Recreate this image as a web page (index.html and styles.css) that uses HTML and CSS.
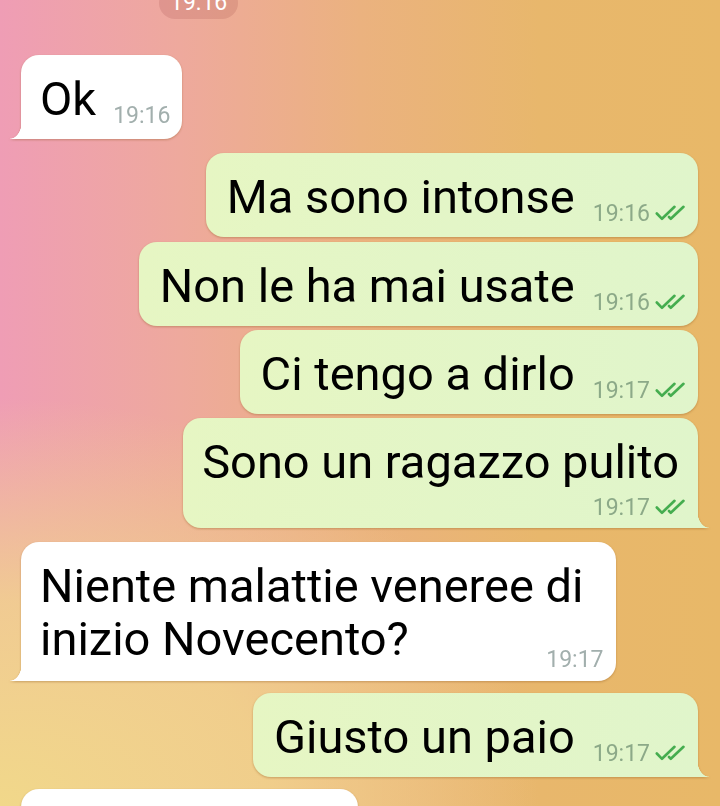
FILE: index.html
```html
<!DOCTYPE html>
<html lang="it">
<head>
<meta charset="utf-8">
<title>Chat</title>
<link rel="stylesheet" href="styles.css">
</head>
<body>
<div class="chat">
  <div class="date-row"><span class="date-pill">19:16</span></div>

  <div class="bubble in tail-in first">
    <div class="text">Ok</div>
    <div class="meta"><span>19:16</span></div>
  </div>

  <div class="bubble out group-start">
    <div class="text">Ma sono intonse</div>
    <div class="meta"><span>19:16</span><svg class="checks" width="33" height="16" viewBox="0 0 33 16"><path d="M1.8 8.5 L7 13.8 L19.5 1.8 M14 12 L15.8 13.8 L28.5 1.8" fill="none" stroke="#45ad4f" stroke-width="2.6" stroke-linecap="round" stroke-linejoin="round"/></svg></div>
  </div>

  <div class="bubble out grouped">
    <div class="text">Non le ha mai usate</div>
    <div class="meta"><span>19:16</span><svg class="checks" width="33" height="16" viewBox="0 0 33 16"><path d="M1.8 8.5 L7 13.8 L19.5 1.8 M14 12 L15.8 13.8 L28.5 1.8" fill="none" stroke="#45ad4f" stroke-width="2.6" stroke-linecap="round" stroke-linejoin="round"/></svg></div>
  </div>

  <div class="bubble out grouped">
    <div class="text">Ci tengo a dirlo</div>
    <div class="meta"><span>19:17</span><svg class="checks" width="33" height="16" viewBox="0 0 33 16"><path d="M1.8 8.5 L7 13.8 L19.5 1.8 M14 12 L15.8 13.8 L28.5 1.8" fill="none" stroke="#45ad4f" stroke-width="2.6" stroke-linecap="round" stroke-linejoin="round"/></svg></div>
  </div>

  <div class="bubble out grouped stack tail-out">
    <div class="text">Sono un ragazzo pulito</div>
    <div class="meta"><span>19:17</span><svg class="checks" width="33" height="16" viewBox="0 0 33 16"><path d="M1.8 8.5 L7 13.8 L19.5 1.8 M14 12 L15.8 13.8 L28.5 1.8" fill="none" stroke="#45ad4f" stroke-width="2.6" stroke-linecap="round" stroke-linejoin="round"/></svg></div>
  </div>

  <div class="bubble in multi tail-in group-start">
    <div class="text">Niente malattie veneree di<br>inizio Novecento?</div>
    <div class="meta"><span>19:17</span></div>
  </div>

  <div class="bubble out tail-out group-next">
    <div class="text">Giusto un paio</div>
    <div class="meta"><span>19:17</span><svg class="checks" width="33" height="16" viewBox="0 0 33 16"><path d="M1.8 8.5 L7 13.8 L19.5 1.8 M14 12 L15.8 13.8 L28.5 1.8" fill="none" stroke="#45ad4f" stroke-width="2.6" stroke-linecap="round" stroke-linejoin="round"/></svg></div>
  </div>

  <div class="bubble in partial group-next"></div>
</div>
</body>
</html>
```

FILE: styles.css
```css
html, body {
  margin: 0;
  padding: 0;
}

.chat {
  width: 720px;
  height: 806px;
  overflow: hidden;
  display: flex;
  flex-direction: column;
  font-family: Roboto, "Noto Sans", sans-serif;
  background:
    radial-gradient(ellipse 900px 680px at 0% 100%, rgba(241, 216, 138, 1) 0%, rgba(241, 214, 138, 0.8) 30%, rgba(241, 214, 138, 0) 60%),
    linear-gradient(90deg, #ef9db5 0%, #eea99d 25%, #ebb27f 50%, #e8b76c 75%, #e8b868 100%);
}

.chat > * {
  flex-shrink: 0;
}

.date-row {
  display: flex;
  padding-left: 159px;
  margin-top: -13px;
}

.date-pill {
  height: 32px;
  line-height: 32px;
  padding: 0 11px;
  border-radius: 16px;
  background: rgba(150, 60, 60, 0.17);
  color: #fff;
  font-size: 23px;
}

.bubble {
  position: relative;
  display: flex;
  align-items: flex-end;
  gap: 17px;
  padding: 17px 12px 14px 19px;
  border-radius: 18px;
  filter: drop-shadow(0 1px 1px rgba(140, 85, 30, 0.4));
}

.in {
  align-self: flex-start;
  margin-left: 21px;
  background: #ffffff;
}

.out {
  align-self: flex-end;
  margin-right: 22px;
  padding-left: 21px;
  padding-right: 10px;
  gap: 18px;
  background: linear-gradient(90deg, #e6f6c3 0%, #e0f5cb 100%);
}

.first {
  margin-top: 36px;
}

.group-start {
  margin-top: 14px;
}

.grouped {
  margin-top: 5px;
}

.grouped + .grouped {
  margin-top: 4px;
}

.group-next {
  margin-top: 12px;
}

.text {
  font-size: 47px;
  line-height: 53px;
  color: #000;
  white-space: nowrap;
}

.meta {
  font-size: 23px;
  line-height: 20px;
  white-space: nowrap;
  margin-bottom: -1px;
}

.in .meta {
  color: #a2afad;
}

.out .meta {
  color: #8ca988;
}

.checks {
  display: inline-block;
  vertical-align: baseline;
  margin-left: 5px;
}

.stack {
  flex-direction: column;
  align-items: stretch;
  gap: 0;
  padding-left: 19px;
  padding-right: 19px;
}

.stack .meta {
  align-self: flex-end;
  margin-top: 10px;
  margin-bottom: -4px;
  margin-right: -9px;
}

.multi {
  flex-direction: column;
  align-items: stretch;
  gap: 0;
}

.multi .text {
  margin-right: 20px;
}

.multi .meta {
  align-self: flex-end;
  margin-top: -15px;
  margin-bottom: -3px;
}

.tail-in {
  border-bottom-left-radius: 0;
}

.tail-in::after {
  content: "";
  position: absolute;
  left: -11px;
  bottom: 0;
  width: 12px;
  height: 18px;
  background: radial-gradient(ellipse 12px 18px at 0 0, rgba(255, 255, 255, 0) 96%, #ffffff 100%);
}

.tail-out {
  border-bottom-right-radius: 0;
}

.tail-out::after {
  content: "";
  position: absolute;
  right: -11px;
  bottom: 0;
  width: 12px;
  height: 18px;
  background: radial-gradient(ellipse 12px 18px at 100% 0, rgba(224, 245, 203, 0) 96%, #e0f5cb 100%);
}

.partial {
  width: 337px;
  height: 60px;
  padding: 0;
}
```
